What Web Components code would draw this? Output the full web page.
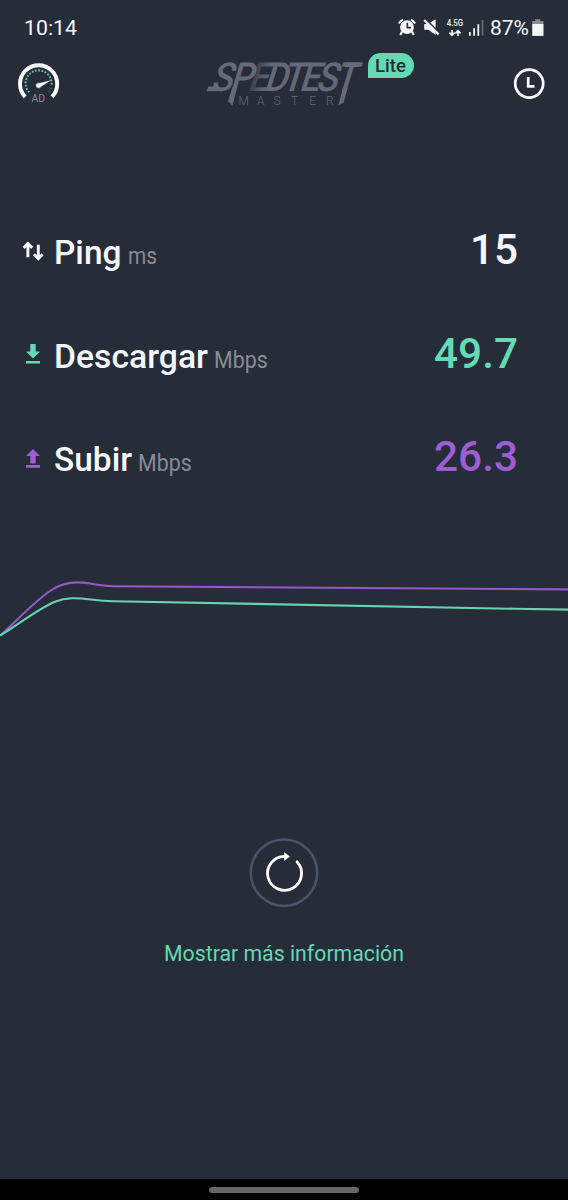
<!DOCTYPE html>
<html lang="es">
<head>
<meta charset="utf-8">
<title>Speedtest Master Lite</title>
<style>
html,body{margin:0;background:#262c38}
body{width:568px;height:1200px;overflow:hidden;font-family:Roboto,"Liberation Sans",sans-serif;color:#f6f8ff}
</style>
</head>
<body>
<speed-app></speed-app>
<script>
const define = (name, html, init) => customElements.define(name, class extends HTMLElement {
  connectedCallback() {
    if (this.shadowRoot) return;
    const root = this.attachShadow({ mode: 'open' });
    const t = document.createElement('template');
    t.innerHTML = html;
    root.append(t.content.cloneNode(true));
    if (init) init(this, root);
  }
});

// Scales its text horizontally so that it fills the requested width.
define('fit-text', `<style>
:host{display:inline-block;white-space:nowrap}
span{display:inline-block;transform-origin:0 50%}
</style><span><slot></slot></span>`, (host, root) => {
  const s = root.querySelector('span');
  const want = +host.getAttribute('width');
  const have = s.getBoundingClientRect().width;
  s.style.transform = `scaleX(${want / have})`;
  host.style.width = want + 'px';
});

define('status-bar', `<style>
:host{display:flex;height:56px;box-sizing:border-box;padding:0 24px;justify-content:space-between;align-items:center;font-size:21px;line-height:56px}
.right{display:flex;align-items:center}
svg{display:block;flex:none}
</style>
<fit-text width="53">10:14</fit-text>
<div class="right">
<svg width="94" height="56" viewBox="396 0 94 56" fill="#f4f5f7">
 <circle cx="407" cy="27.2" r="6.9"/>
 <path d="M402 31.5 400.3 35M412 31.5l1.7 3.5" stroke="#f4f5f7" stroke-width="2.2"/>
 <path d="M398.9 23.6a9.8 9.8 0 0 1 4.1-3.9M411 19.7a9.8 9.8 0 0 1 4.1 3.9" fill="none" stroke="#f4f5f7" stroke-width="2"/>
 <path d="M407.3 22.8v4.8h3.6" fill="none" stroke="#262c38" stroke-width="1.6"/>
 <path d="M424.2 24h3.8l7.6-4.8v15.9l-7.2-5.3h-4.2z"/>
 <path d="M425.6 19.2 440 33.6" stroke="#262c38" stroke-width="1.8"/>
 <path d="M424.2 20 438.6 34.4" stroke="#f4f5f7" stroke-width="2.2"/>
 <text x="446.7" y="26" font-family="Roboto" font-size="8.4" font-weight="500" textLength="16.5" lengthAdjust="spacingAndGlyphs">4.5G</text>
 <path d="M452 30v5M449.4 32.6l2.6 2.7 2.6-2.7M458 36v-5M455.4 33.4l2.6-2.7 2.6 2.7" fill="none" stroke="#f4f5f7" stroke-width="1.6"/>
 <path d="M469 32h1.8v3.7H469zM473.2 28.3h1.8v7.4h-1.8zM477.4 24.2h1.8v11.5h-1.8z"/>
 <path d="M481.6 20h1.8v15.7h-1.8z" fill="#626772"/>
</svg>
<fit-text width="39">87%</fit-text>
<svg width="15" height="56" viewBox="529 0 15 56"><path d="M535.2 19.2h5v1.8h3.3v2.8h-11.3V21h3z" fill="#858a92"/><path d="M532.2 23.8h11.3v12.1h-11.3z" fill="#f4f5f7"/></svg>
</div>`);

define('gauge-icon', `<style>:host{display:block;width:44px;height:48px}svg{display:block}</style>
<svg width="44" height="48" viewBox="17 60 44 48" fill="none">
 <path d="M25.2 96.8A18.6 18.6 0 1 1 52 96.8" stroke="#fff" stroke-width="3.9"/>
 <path d="M29.2 92.3A13 13 0 1 1 51.4 85.6" stroke="#5bc4a8" stroke-width="2" stroke-dasharray="1.8 1.5"/>
 <path d="M51.1 87.7A13 13 0 0 1 48 92.8" stroke="#2d6a62" stroke-width="1.5" stroke-dasharray="1.6 1.8"/>
 <circle cx="38.6" cy="85.5" r="3.1" fill="#606874"/>
 <path d="M37 83.8 51 80.2 39.7 87.4Q37.4 88.4 36.4 86.6 35.8 84.7 37 83.8z" fill="#fff"/>
 <text x="31.6" y="101.9" font-family="Roboto" font-size="10.5" fill="#858b95" textLength="13.6" lengthAdjust="spacingAndGlyphs">AD</text>
</svg>`);

define('brand-logo', `<style>:host{display:flex;width:208px;height:54px}svg{display:block;flex:none;margin-top:-8px;overflow:visible}
.lite{width:47px;height:25px;margin-top:-3px;margin-left:6px;border-radius:12.5px 12.5px 12.5px 0;background:#64d9b2;color:#262c38;font-size:18.5px;font-weight:500;line-height:26px;text-align:center}</style>
<svg width="156" height="62" viewBox="206 48 156 62" font-family="Roboto">
 <defs><linearGradient id="fade" gradientUnits="userSpaceOnUse" x1="46" y1="0" x2="66" y2="0"><stop offset="0" stop-color="#646a77" stop-opacity=".2"/><stop offset="1" stop-color="#646a77"/></linearGradient></defs>
 <g fill="#646a77">
 <text transform="translate(206 91) skewX(-17) scale(.88 1)" font-size="40" font-weight="500" y="0" x="4.5 26 46.5 65 85 105 124 145">SP<tspan fill="url(#fade)">E</tspan>DTEST</text>
 <path d="M206.5 91.3 208.4 86.6H216L219 91.3zM232.4 87.5h4.8l-4.8 18-4.4-4.2zM343 87.5h4.8l-4.1 15-5.3 3zM345 62.5h16.8l-3.6 4.4H345z"/>
 </g>
 <text y="105.4" x="238.5 257 273.5 291 309.2 326" font-size="12" font-weight="300" fill="#626976">MASTER</text>
</svg>
<div class="lite">Lite</div>`);

define('history-icon', `<style>:host{display:block;width:32px;height:32px}svg{display:block}</style>
<svg width="32" height="32" viewBox="0 0 32 32" fill="none" stroke="#fafbff"><circle cx="16.2" cy="16.6" r="14" stroke-width="2.7"/><path d="M15.2 10v9.3h6.3" stroke-width="2.7"/></svg>`);

define('app-header', `<style>
:host{display:flex;height:54px;box-sizing:border-box;padding:0 23px 0 17px;justify-content:space-between;align-items:flex-start}
gauge-icon{margin-top:4px}brand-logo{margin-left:45px}history-icon{margin-top:11px}
</style><gauge-icon></gauge-icon><brand-logo></brand-logo><history-icon></history-icon>`);

const icons = {
  ping: '<path d="M5.9 17.2V3.6M1.6 7.9l4.3-4.3 4.3 4.3M16.3 4.8v13.8M12 14.3l4.3 4.3 4.3-4.3" fill="none" stroke="#f7f8ff" stroke-width="2.9"/>',
  down: '<path d="M8.3 1h5.4v7.5H18L11 15.5 4 8.5h4.3zM4 18h14v2.6H4z" fill="#66dab5"/>',
  up: '<path d="M8.3 16.5h5.4V9H18L11 2 4 9h4.3zM4 18h14v2.8H4z" fill="#a05ed5"/>'
};
define('metric-row', `<style>
:host{display:flex;height:103.4px;box-sizing:border-box;padding:0 50px 0 22px;line-height:103.4px;align-items:baseline}
svg{display:block;align-self:center;flex:none;margin:2px 10px 0 0}
.label{font-size:33.5px;font-weight:500}
.unit{font-size:23.5px;color:#878c95;margin-left:6px;font-weight:400}
.value{margin-left:auto;font-size:42px;font-weight:500}
</style><svg width="22" height="22" viewBox="0 0 22 22"></svg>`, (host, root) => {
  const a = n => host.getAttribute(n);
  root.querySelector('svg').innerHTML = icons[a('icon')];
  for (const [cls, w] of [['label', 'lw'], ['unit', 'uw'], ['value', 'vw']]) {
    const e = document.createElement('fit-text');
    e.className = cls;
    e.textContent = a(cls);
    e.setAttribute('width', a(w));
    if (cls === 'value') e.style.color = a('tint');
    root.append(e);
  }
});

define('speed-chart', `<style>:host{display:block;height:90px}svg{display:block}</style>
<svg width="568" height="90" viewBox="0 560 568 90" fill="none" stroke-width="2.1">
 <path d="M0 635.5C8 630 32 603 50 591C63 581.8 78 581.4 90 583.5Q105 586.2 114 586.2L568 589.4" stroke="#9658cb"/>
 <path d="M0 635.5C12 629 38 608.5 55 601.7C66 597.2 77 597.7 91 599.5Q103 601 113 601.2L515 608.8 568 609.6" stroke="#66d3b2"/>
</svg>`);

define('retry-button', `<style>:host{display:block;width:70px;height:70px}svg{display:block}</style>
<svg width="70" height="70" viewBox="249 838 70 70" fill="none"><circle cx="284" cy="872.7" r="33.2" stroke="#48546a" stroke-width="2.5"/>
<path d="M297 861.7A17 17 0 1 1 284.6 856.3" stroke="#fff" stroke-width="2.8" stroke-linecap="round"/><path d="M284.2 852.2 289.9 856.4 284.2 861z" fill="#fff"/></svg>`);

define('nav-bar', `<style>:host{display:flex;height:21px;background:#000;align-items:center;justify-content:center}div{width:150px;height:5.5px;border-radius:3px;background:#666;margin-top:1px}</style><div></div>`);

define('speed-app', `<style>
:host{display:flex;flex-direction:column;width:568px;height:1200px;background:#262c38}
main{flex:1;display:flex;flex-direction:column;padding-top:88.4px}
speed-chart{margin-top:51.4px}
retry-button{margin:188px auto 0}
.more{margin:28.2px auto 0;font-size:22px;line-height:36px;color:#65d8b3}
</style>
<status-bar></status-bar><app-header></app-header>
<main>
<section>
<metric-row icon="ping" label="Ping" lw="67.5" unit="ms" uw="29" value="15" vw="48" tint="#f6f8ff"></metric-row>
<metric-row icon="down" label="Descargar" lw="154" unit="Mbps" uw="53.7" value="49.7" vw="84" tint="#65dab5"></metric-row>
<metric-row icon="up" label="Subir" lw="78" unit="Mbps" uw="53.7" value="26.3" vw="84" tint="#9e5ed3"></metric-row>
</section>
<speed-chart></speed-chart>
<retry-button></retry-button>
<fit-text class="more" width="240">Mostrar más información</fit-text>
</main>
<nav-bar></nav-bar>`);
</script>
</body>
</html>
